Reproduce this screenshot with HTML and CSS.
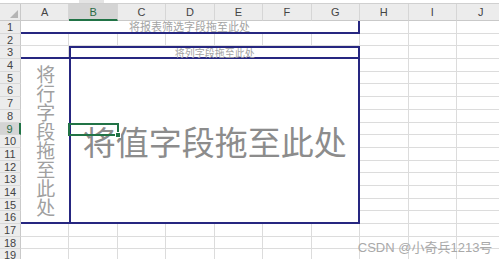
FILE: index.html
```html
<!DOCTYPE html>
<html>
<head>
    <title>数据透视表</title>
    <link rel="stylesheet" href="styles.css">
</head>
<body>
    <div class="topbar">
        <div class="name-box"></div>
        <div class="formula-box"></div>
    </div>

    <div class="sheet">
        <div class="corner">
            <svg width="8" height="8" viewBox="0 0 8 8"><polygon points="8,0 8,8 0,8" fill="#b5b5b5"/></svg>
        </div>
        <div class="col-head">A</div>
        <div class="col-head active">B</div>
        <div class="col-head">C</div>
        <div class="col-head">D</div>
        <div class="col-head">E</div>
        <div class="col-head">F</div>
        <div class="col-head">G</div>
        <div class="col-head">H</div>
        <div class="col-head">I</div>
        <div class="col-head">J</div>

        <div class="row-head">1</div>
        <div class="row-head">2</div>
        <div class="row-head">3</div>
        <div class="row-head">4</div>
        <div class="row-head">5</div>
        <div class="row-head">6</div>
        <div class="row-head">7</div>
        <div class="row-head">8</div>
        <div class="row-head active">9</div>
        <div class="row-head">10</div>
        <div class="row-head">11</div>
        <div class="row-head">12</div>
        <div class="row-head">13</div>
        <div class="row-head">14</div>
        <div class="row-head">15</div>
        <div class="row-head">16</div>
        <div class="row-head">17</div>
        <div class="row-head">18</div>
        <div class="row-head">19</div>

        <div class="cells"></div>

        <div class="zone filter-zone">将报表筛选字段拖至此处</div>
        <div class="zone column-zone">将列字段拖至此处</div>
        <div class="zone row-zone"><span>将行字段拖至此处</span></div>
        <div class="zone value-zone">将值字段拖至此处</div>

        <div class="active-cell"><span class="fill-handle"></span></div>

        <div class="watermark">CSDN @小奇兵1213号</div>
    </div>
</body>
</html>
```

FILE: styles.css
```css
html, body {
    margin: 0;
    overflow: hidden;
    background-color: #ffffff;
}
body {
    font-family: "Liberation Sans", "Noto Sans CJK SC", sans-serif;
}

.topbar {
    height: 3px;
    display: flex;
    gap: 25px;
    background-color: #e4e4e4;
    border-bottom: 1px solid #d0d0d0;
}
.name-box {
    width: 79px;
    background-color: #ffffff;
}
.formula-box {
    flex: 1;
    background-color: #ffffff;
}

.sheet {
    display: grid;
    grid-template-columns: 21px repeat(10, 48.45px);
    grid-template-rows: 17px repeat(19, 12.69px);
}

.corner {
    background-color: #ececec;
    border-right: 1px solid #c9c9c9;
    border-bottom: 1px solid #c9c9c9;
    box-sizing: border-box;
    display: flex;
    align-items: flex-end;
    justify-content: flex-end;
    padding: 0 2px 2px 0;
}

.col-head {
    background-color: #ececec;
    border-right: 1px solid #d6d6d6;
    border-bottom: 1px solid #c9c9c9;
    box-sizing: border-box;
    font-size: 11px;
    color: #444444;
    display: flex;
    align-items: center;
    justify-content: center;
}
.col-head.active {
    background-color: #d4d4d4;
    color: #2b6b45;
    border-bottom: 2px solid #217346;
}

.row-head {
    grid-column: 1;
    background-color: #ececec;
    border-right: 1px solid #c9c9c9;
    border-bottom: 1px solid #d8d8d8;
    box-sizing: border-box;
    font-size: 11px;
    line-height: 12px;
    color: #444444;
    text-align: center;
}
.row-head.active {
    background-color: #d4d4d4;
    color: #2b6b45;
    border-right: 2px solid #217346;
}

.cells {
    grid-column: 2 / 12;
    grid-row: 2 / 21;
    background-image:
        repeating-linear-gradient(to right, transparent 0 47.45px, #dcdcdc 47.45px 48.45px),
        repeating-linear-gradient(to bottom, transparent 0 11.69px, #dcdcdc 11.69px 12.69px);
}

.zone {
    background-color: #ffffff;
    box-sizing: border-box;
    color: #a3a3a3;
    font-family: "Noto Sans CJK SC", sans-serif;
    display: flex;
    align-items: center;
    justify-content: center;
    white-space: nowrap;
}
.filter-zone {
    grid-column: 2 / 9;
    grid-row: 2 / 3;
    border-right: 2px solid #262680;
    border-bottom: 2px solid #262680;
    font-size: 11px;
    line-height: 10px;
}
.column-zone {
    grid-column: 3 / 9;
    grid-row: 4 / 5;
    border: 2px solid #262680;
    font-size: 10px;
    line-height: 8px;
}
.row-zone {
    grid-column: 2 / 3;
    grid-row: 5 / 18;
    border-top: 2px solid #262680;
    border-bottom: 2px solid #262680;
    margin-top: -2px;
    font-size: 19px;
    color: #a0a0a0;
}
.row-zone span {
    writing-mode: vertical-rl;
    line-height: 22px;
}
.value-zone {
    grid-column: 3 / 9;
    grid-row: 5 / 18;
    border-left: 2px solid #262680;
    border-right: 2px solid #262680;
    border-bottom: 2px solid #262680;
    font-size: 33px;
    color: #8c8c8c;
}

.active-cell {
    grid-column: 3 / 4;
    grid-row: 10 / 11;
    margin: 0 -1px -1px -1px;
    border: 2px solid #217346;
    box-sizing: border-box;
    z-index: 2;
    display: flex;
    align-items: flex-end;
    justify-content: flex-end;
}
.fill-handle {
    width: 4px;
    height: 4px;
    background-color: #217346;
    border: 1px solid #ffffff;
    margin: 0 -4px -4px 0;
}

.watermark {
    grid-column: 9 / 12;
    grid-row: 19 / 21;
    align-self: center;
    justify-self: end;
    margin: -6px 13px 0 0;
    white-space: nowrap;
    font-size: 13px;
    color: #a9a9a9;
    z-index: 3;
}
```
